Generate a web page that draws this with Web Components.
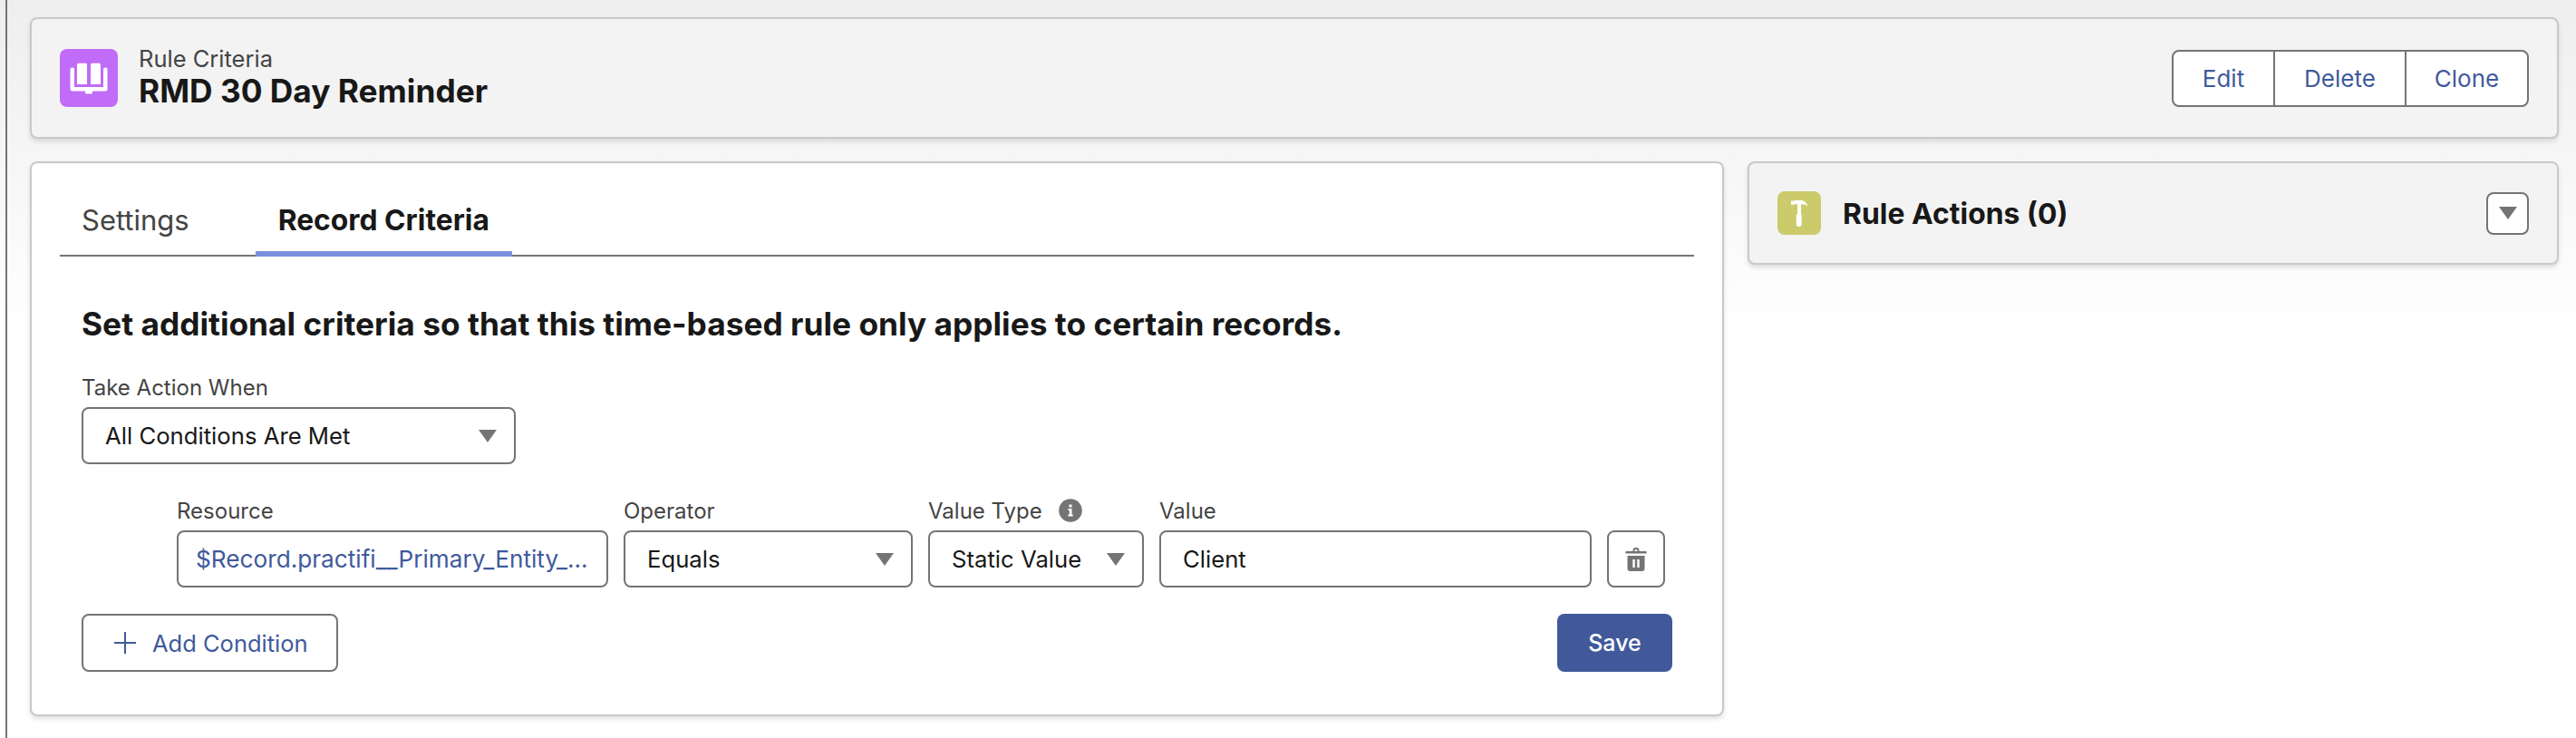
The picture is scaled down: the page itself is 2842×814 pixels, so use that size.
<!DOCTYPE html>
<html>
<head>
<meta charset="utf-8">
<title>RMD 30 Day Reminder</title>
<style>
  html, body { margin: 0; height: 100%; }
  body {
    font-family: Inter, "Liberation Sans", sans-serif;
    color: #181818;
    background: linear-gradient(#eeeeee 0, #ffffff 370px);
    background-repeat: no-repeat;
    overflow: hidden;
  }
</style>
</head>
<body>

<rule-page>
  <rule-header slot="header" caption="Rule Criteria" title-text="RMD 30 Day Reminder">
    <button-group>
      <group-button>Edit</group-button>
      <group-button>Delete</group-button>
      <group-button>Clone</group-button>
    </button-group>
  </rule-header>

  <criteria-card slot="main">
    <tab-bar>
      <tab-item>Settings</tab-item>
      <tab-item active>Record Criteria</tab-item>
    </tab-bar>
    <criteria-form>
      <form-field class="when" label="Take Action When" value="All Conditions Are Met" arrow></form-field>
      <condition-row>
        <form-field label="Resource" value="$Record.practifi__Primary_Entity_..." link></form-field>
        <form-field label="Operator" value="Equals" arrow></form-field>
        <form-field label="Value Type" value="Static Value" arrow info></form-field>
        <form-field label="Value" value="Client"></form-field>
        <delete-button></delete-button>
      </condition-row>
      <form-actions>
        <add-button>Add Condition</add-button>
        <save-button>Save</save-button>
      </form-actions>
    </criteria-form>
  </criteria-card>

  <actions-card slot="side">Rule Actions (0)</actions-card>
</rule-page>

<script>
const BOOK_ICON = `<svg width="64" height="64" viewBox="0 0 64 64"><path fill="#fff" d="M20.500 15.700h8a1.500 1.500 0 0 1 1.500 1.500v21.800H19v-21.800a1.500 1.500 0 0 1 1.500-1.500zM35.500 15.700h8a1.500 1.500 0 0 1 1.500 1.500v21.800H34v-21.800a1.500 1.500 0 0 1 1.500-1.500z"/><path fill="#fff" d="M13.500 20.500h.5a2 2 0 0 1 2 2v19.500h32v-19.500a2 2 0 0 1 2-2h.5a2 2 0 0 1 2 2v21.500a2.500 2.500 0 0 1-2.500 2.500H36v1.500a1.500 1.500 0 0 1-1.500 1.500h-5a1.500 1.500 0 0 1-1.500-1.500v-1.500H14a2.500 2.500 0 0 1-2.500-2.500V22.500a2 2 0 0 1 2-2z"/></svg>`;

const HAMMER_ICON = `<svg width="48" height="48" viewBox="0 0 48 48"><path fill="#fff" d="M15 10.500h3.500l1-.8h6c3.500 0 6.500 2.500 8 6.800-2-1.500-4-2.300-7.500-2.300V25c.5.500.7 1 .7 1.800V36a3 3 0 0 1-6 0v-9.200c0-.8.500-1.300 1.300-1.800V14h-2.500l-.8.800H15z"/></svg>`;

const TRASH_ICON = `<svg width="24" height="26" viewBox="0 0 24 26"><path fill="#747474" fill-rule="evenodd" d="M8.500 4V3a3 3 0 0 1 3-3h1a3 3 0 0 1 3 3v1h7.200a1 1 0 0 1 1 1v.5a1 1 0 0 1-1 1H1.300a1 1 0 0 1-1-1V5a1 1 0 0 1 1-1zM10.500 4h3V3a1 1 0 0 0-1-1h-1a1 1 0 0 0-1 1zM2.500 9h19v14a3 3 0 0 1-3 3h-13a3 3 0 0 1-3-3zM8.300 13v9h2.400v-9zM13.300 13v9h2.400v-9z"/></svg>`;

const ARROW = `<svg width="20" height="14" viewBox="0 0 20 14"><path fill="#747474" d="M0 0h20L10 14z"/></svg>`;

const INFO_ICON = `<svg width="26" height="26" viewBox="0 0 26 26"><circle cx="13" cy="13" r="12.800" fill="#747474"/><path fill="#fff" d="M11.500 6.500h3v3h-3zM10.500 11h4v6.500h1.200v2h-5.200v-2h1.300V13h-1.300z"/></svg>`;

const PLUS_ICON = `<svg width="24" height="24" viewBox="0 0 24 24"><path fill="#3f5a9c" d="M11 0h2v11h11v2H13v11h-2V13H0v-2h11z"/></svg>`;

class RulePage extends HTMLElement {
  constructor() {
    super();
    this.shadowDOM = this.attachShadow({mode: "open"});
    this.shadowDOM.innerHTML = `
      <style>
        :host {
          display: block;
          box-sizing: border-box;
          height: 814px;
          margin-left: 6px;
          border-left: 2px solid #747474;
          padding: 19px 19px 0 25px;
        }
        .columns {
          display: grid;
          grid-template-columns: 1869px 895px;
          column-gap: 26px;
          align-items: start;
          margin-top: 25px;
        }
      </style>
      <slot name="header"></slot>
      <div class="columns">
        <slot name="main"></slot>
        <slot name="side"></slot>
      </div>`;
  }
}

class RuleHeader extends HTMLElement {
  constructor() {
    super();
    this.shadowDOM = this.attachShadow({mode: "open"});
  }
  connectedCallback() {
    this.shadowDOM.innerHTML = `
      <style>
        :host {
          display: flex;
          align-items: center;
          box-sizing: border-box;
          height: 134px;
          padding: 0 31px;
          background: #f3f3f3;
          border: 2px solid #c9c9c9;
          border-radius: 8px;
          box-shadow: 0 3px 5px rgba(0, 0, 0, .12);
        }
        .tile {
          width: 64px;
          height: 64px;
          flex: none;
          background: #c06cf8;
          border-radius: 8px;
        }
        svg { display: block; }
        .names { margin-left: 23px; flex: 1; }
        .caption { font-size: 25.500px; line-height: 30px; color: #444; }
        .title { font-size: 35.300px; line-height: 42px; font-weight: 700; }
      </style>
      <div class="tile">${BOOK_ICON}</div>
      <div class="names">
        <div class="caption">${this.getAttribute("caption")}</div>
        <div class="title">${this.getAttribute("title-text")}</div>
      </div>
      <slot></slot>`;
  }
}

class ButtonGroup extends HTMLElement {
  constructor() {
    super();
    this.shadowDOM = this.attachShadow({mode: "open"});
    this.shadowDOM.innerHTML = `
      <style>
        :host {
          display: grid;
          grid-template-columns: 110px 145px 135px;
          box-sizing: border-box;
          height: 63px;
          background: #fff;
          border: 2px solid #747474;
          border-radius: 8px;
        }
      </style>
      <slot></slot>`;
  }
}

class GroupButton extends HTMLElement {
  constructor() {
    super();
    this.shadowDOM = this.attachShadow({mode: "open"});
    this.shadowDOM.innerHTML = `
      <style>
        :host {
          display: flex;
          align-items: center;
          justify-content: center;
          font-size: 26px;
          color: #3f5a9c;
          border-left: 2px solid #747474;
        }
        :host(:first-child) { border-left: 0; }
      </style>
      <slot></slot>`;
  }
}

class CriteriaCard extends HTMLElement {
  constructor() {
    super();
    this.shadowDOM = this.attachShadow({mode: "open"});
    this.shadowDOM.innerHTML = `
      <style>
        :host {
          display: block;
          box-sizing: border-box;
          height: 612px;
          padding: 0 31px;
          background: #fff;
          border: 2px solid #c9c9c9;
          border-radius: 8px;
          box-shadow: 0 3px 5px rgba(0, 0, 0, .12);
        }
      </style>
      <slot></slot>`;
  }
}

class TabBar extends HTMLElement {
  constructor() {
    super();
    this.shadowDOM = this.attachShadow({mode: "open"});
    this.shadowDOM.innerHTML = `
      <style>
        :host {
          display: flex;
          gap: 49px;
          box-sizing: border-box;
          height: 103px;
          align-items: flex-end;
          border-bottom: 2px solid #747474;
        }
      </style>
      <slot></slot>`;
  }
}

class TabItem extends HTMLElement {
  constructor() {
    super();
    this.shadowDOM = this.attachShadow({mode: "open"});
    this.shadowDOM.innerHTML = `
      <style>
        :host {
          display: block;
          box-sizing: border-box;
          height: 59px;
          margin-bottom: -2px;
          padding: 0 24px;
          font-size: 31px;
          line-height: 38px;
          color: #444;
        }
        :host([active]) {
          padding: 0 25px;
          font-size: 31.800px;
          font-weight: 700;
          color: #181818;
          border-bottom: 6px solid #7b8fdf;
        }
      </style>
      <slot></slot>`;
  }
}

class CriteriaForm extends HTMLElement {
  constructor() {
    super();
    this.shadowDOM = this.attachShadow({mode: "open"});
    this.shadowDOM.innerHTML = `
      <style>
        :host { display: block; padding: 53px 24px 0; }
        h2 {
          margin: 0 0 33px;
          font-size: 35.300px;
          line-height: 44px;
          font-weight: 700;
        }
        ::slotted(.when) { width: 479px; }
      </style>
      <h2>Set additional criteria so that this time-based rule only applies to certain records.</h2>
      <slot></slot>`;
  }
}

class FormField extends HTMLElement {
  constructor() {
    super();
    this.shadowDOM = this.attachShadow({mode: "open"});
  }
  connectedCallback() {
    const info = this.hasAttribute("info") ? `<span class="info">${INFO_ICON}</span>` : "";
    const arrow = this.hasAttribute("arrow") ? ARROW : "";
    this.shadowDOM.innerHTML = `
      <style>
        :host { display: block; }
        .label {
          display: flex;
          align-items: center;
          box-sizing: border-box;
          height: 36px;
          padding-bottom: 8px;
          font-size: 24px;
          color: #444;
        }
        .info { margin-left: 18px; display: flex; }
        .box {
          display: flex;
          align-items: center;
          justify-content: space-between;
          box-sizing: border-box;
          height: 63px;
          padding: 0 19px 0 24px;
          background: #fff;
          border: 2px solid #747474;
          border-radius: 8px;
          font-size: 25.700px;
          white-space: nowrap;
        }
        :host([link]) .box { color: #3f5a9c; padding-left: 19px; font-size: 26.200px; }
      </style>
      <div class="label">${this.getAttribute("label")}${info}</div>
      <div class="box"><span>${this.getAttribute("value")}</span>${arrow}</div>`;
  }
}

class ConditionRow extends HTMLElement {
  constructor() {
    super();
    this.shadowDOM = this.attachShadow({mode: "open"});
    this.shadowDOM.innerHTML = `
      <style>
        :host {
          display: grid;
          grid-template-columns: 476px 319px 238px 477px 64px;
          column-gap: 17px;
          align-items: end;
          margin: 37px 0 29px 105px;
        }
      </style>
      <slot></slot>`;
  }
}

class DeleteButton extends HTMLElement {
  constructor() {
    super();
    this.shadowDOM = this.attachShadow({mode: "open"});
    this.shadowDOM.innerHTML = `
      <style>
        :host {
          display: flex;
          align-items: center;
          justify-content: center;
          box-sizing: border-box;
          height: 63px;
          border: 2px solid #747474;
          border-radius: 8px;
          background: #fff;
        }
      </style>
      ${TRASH_ICON}`;
  }
}

class FormActions extends HTMLElement {
  constructor() {
    super();
    this.shadowDOM = this.attachShadow({mode: "open"});
    this.shadowDOM.innerHTML = `
      <style>
        :host { display: flex; justify-content: space-between; }
      </style>
      <slot></slot>`;
  }
}

class AddButton extends HTMLElement {
  constructor() {
    super();
    this.shadowDOM = this.attachShadow({mode: "open"});
    this.shadowDOM.innerHTML = `
      <style>
        :host {
          display: flex;
          align-items: center;
          gap: 18px;
          box-sizing: border-box;
          width: 283px;
          height: 64px;
          padding-left: 34px;
          border: 2px solid #747474;
          border-radius: 8px;
          background: #fff;
          font-size: 25.500px;
          color: #3f5a9c;
        }
      </style>
      ${PLUS_ICON}<slot></slot>`;
  }
}

class SaveButton extends HTMLElement {
  constructor() {
    super();
    this.shadowDOM = this.attachShadow({mode: "open"});
    this.shadowDOM.innerHTML = `
      <style>
        :host {
          display: flex;
          align-items: center;
          justify-content: center;
          width: 127px;
          height: 64px;
          border-radius: 8px;
          background: #41599a;
          color: #fff;
          font-size: 25px;
          font-weight: 500;
        }
      </style>
      <slot></slot>`;
  }
}

class ActionsCard extends HTMLElement {
  constructor() {
    super();
    this.shadowDOM = this.attachShadow({mode: "open"});
    this.shadowDOM.innerHTML = `
      <style>
        :host {
          display: flex;
          align-items: center;
          box-sizing: border-box;
          height: 114px;
          padding: 0 31px;
          background: #f3f3f3;
          border: 2px solid #c9c9c9;
          border-radius: 8px;
          box-shadow: 0 3px 5px rgba(0, 0, 0, .12);
        }
        .tile {
          width: 48px;
          height: 48px;
          flex: none;
          background: #cbcb6c;
          border-radius: 8px;
        }
        svg { display: block; }
        .name {
          flex: 1;
          margin-left: 24px;
          font-size: 31.900px;
          font-weight: 700;
        }
        .toggle {
          display: flex;
          align-items: center;
          justify-content: center;
          box-sizing: border-box;
          width: 47px;
          height: 47px;
          background: #fff;
          border: 2px solid #747474;
          border-radius: 8px;
        }
      </style>
      <div class="tile">${HAMMER_ICON}</div>
      <div class="name"><slot></slot></div>
      <div class="toggle">${ARROW}</div>`;
  }
}

customElements.define("rule-page", RulePage);
customElements.define("rule-header", RuleHeader);
customElements.define("button-group", ButtonGroup);
customElements.define("group-button", GroupButton);
customElements.define("criteria-card", CriteriaCard);
customElements.define("tab-bar", TabBar);
customElements.define("tab-item", TabItem);
customElements.define("criteria-form", CriteriaForm);
customElements.define("form-field", FormField);
customElements.define("condition-row", ConditionRow);
customElements.define("delete-button", DeleteButton);
customElements.define("form-actions", FormActions);
customElements.define("add-button", AddButton);
customElements.define("save-button", SaveButton);
customElements.define("actions-card", ActionsCard);
</script>
</body>
</html>
